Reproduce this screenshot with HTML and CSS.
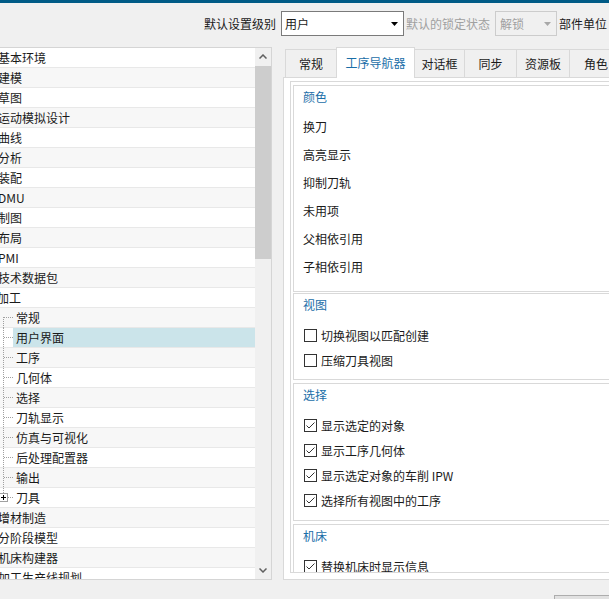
FILE: index.html
```html
<!DOCTYPE html>
<html lang="zh-CN">
<head>
<meta charset="utf-8">
<title>用户默认设置</title>
<link rel="stylesheet" href="styles.css">
</head>
<body>
<div class="topstrip"></div>
<div class="toolbar">
  <span class="lbl">默认设置级别</span>
  <div class="combo combo-main">
    <span>用户</span>
    <svg class="arrow" width="7" height="4" viewBox="0 0 7 4"><path d="M0 0H7L3.5 4Z" fill="#000"/></svg>
  </div>
  <span class="lbl disabled">默认的锁定状态</span>
  <div class="combo combo-disabled">
    <span>解锁</span>
    <svg class="arrow" width="7" height="4" viewBox="0 0 7 4"><path d="M0 0H7L3.5 4Z" fill="#a8a8a8"/></svg>
  </div>
  <span class="lbl">部件单位</span>
</div>

<div class="main">
  <div class="treebox">
    <ul class="tree">
      <li class="row"><span class="text">基本环境</span></li>
      <li class="row"><span class="text">建模</span></li>
      <li class="row"><span class="text">草图</span></li>
      <li class="row"><span class="text">运动模拟设计</span></li>
      <li class="row"><span class="text">曲线</span></li>
      <li class="row"><span class="text">分析</span></li>
      <li class="row"><span class="text">装配</span></li>
      <li class="row"><span class="text">DMU</span></li>
      <li class="row"><span class="text">制图</span></li>
      <li class="row"><span class="text">布局</span></li>
      <li class="row"><span class="text">PMI</span></li>
      <li class="row"><span class="text">技术数据包</span></li>
      <li class="row"><span class="text text-cut">加工</span></li>
      <li class="row child"><span class="guide guide-first"></span><span class="text">常规</span></li>
      <li class="row child selected"><span class="guide"></span><span class="text">用户界面</span></li>
      <li class="row child"><span class="guide"></span><span class="text">工序</span></li>
      <li class="row child"><span class="guide"></span><span class="text">几何体</span></li>
      <li class="row child"><span class="guide"></span><span class="text">选择</span></li>
      <li class="row child"><span class="guide"></span><span class="text">刀轨显示</span></li>
      <li class="row child"><span class="guide"></span><span class="text">仿真与可视化</span></li>
      <li class="row child"><span class="guide"></span><span class="text">后处理配置器</span></li>
      <li class="row child"><span class="guide"></span><span class="text">输出</span></li>
      <li class="row child"><span class="guide guide-last"><svg width="13" height="20" viewBox="0 0 13 20"><path d="M3.5 0V1M3.5 2V3M3.5 4V5" stroke="#a0a0a0" stroke-width="1"/><rect x="-0.5" y="5.5" width="8" height="8" fill="#fff" stroke="#a0a0a0"/><path d="M1 9.5H6M3.5 7V12" stroke="#000" stroke-width="1"/><path d="M8 9.5H9M10 9.5H11M12 9.5H13" stroke="#a0a0a0" stroke-width="1"/></svg></span><span class="text">刀具</span></li>
      <li class="row"><span class="text">增材制造</span></li>
      <li class="row"><span class="text">分阶段模型</span></li>
      <li class="row"><span class="text">机床构建器</span></li>
      <li class="row"><span class="text">加工生产线规划</span></li>
    </ul>
    <div class="vscroll">
      <div class="sbtn"><svg width="8" height="5" viewBox="0 0 8 5"><path d="M0.5 4.5L4 1L7.5 4.5" fill="none" stroke="#606060" stroke-width="1.5"/></svg></div>
      <div class="thumb"></div>
      <div class="track"></div>
      <div class="sbtn"><svg width="8" height="5" viewBox="0 0 8 5"><path d="M0.5 0.5L4 4L7.5 0.5" fill="none" stroke="#606060" stroke-width="1.5"/></svg></div>
    </div>
  </div>

  <div class="prefs">
    <div class="tabs">
      <div class="tab w52">常规</div>
      <div class="tab active w79">工序导航器</div>
      <div class="tab w51">对话框</div>
      <div class="tab w53">同步</div>
      <div class="tab w54">资源板</div>
      <div class="tab w54">角色</div>
    </div>
    <div class="tabpanel">
      <div class="scrollarea">
        <section class="group group-colors">
          <div class="gtitle">颜色</div>
          <ul class="items items-plain">
            <li>换刀</li>
            <li>高亮显示</li>
            <li>抑制刀轨</li>
            <li>未用项</li>
            <li>父相依引用</li>
            <li>子相依引用</li>
          </ul>
        </section>
        <section class="group group-view">
          <div class="gtitle">视图</div>
          <ul class="items items-check">
            <li><span class="cb"></span>切换视图以匹配创建</li>
            <li><span class="cb"></span>压缩刀具视图</li>
          </ul>
        </section>
        <section class="group group-select">
          <div class="gtitle">选择</div>
          <ul class="items items-check">
            <li><span class="cb checked"><svg width="11" height="11" viewBox="0 0 11 11"><path d="M1.5 5.5L4 8L9.5 2.5" fill="none" stroke="#333" stroke-width="1"/></svg></span>显示选定的对象</li>
            <li><span class="cb checked"><svg width="11" height="11" viewBox="0 0 11 11"><path d="M1.5 5.5L4 8L9.5 2.5" fill="none" stroke="#333" stroke-width="1"/></svg></span>显示工序几何体</li>
            <li><span class="cb checked"><svg width="11" height="11" viewBox="0 0 11 11"><path d="M1.5 5.5L4 8L9.5 2.5" fill="none" stroke="#333" stroke-width="1"/></svg></span>显示选定对象的车削 IPW</li>
            <li><span class="cb checked"><svg width="11" height="11" viewBox="0 0 11 11"><path d="M1.5 5.5L4 8L9.5 2.5" fill="none" stroke="#333" stroke-width="1"/></svg></span>选择所有视图中的工序</li>
          </ul>
        </section>
        <section class="group group-machine">
          <div class="gtitle">机床</div>
          <ul class="items items-check">
            <li><span class="cb checked"><svg width="11" height="11" viewBox="0 0 11 11"><path d="M1.5 5.5L4 8L9.5 2.5" fill="none" stroke="#333" stroke-width="1"/></svg></span>替换机床时显示信息</li>
          </ul>
        </section>
      </div>
    </div>
  </div>
</div>

<div class="footer"><div class="btn"></div></div>
</body>
</html>
```

FILE: styles.css
```css
* { box-sizing: border-box; }
html, body { margin: 0; padding: 0; }
body {
  width: 609px;
  height: 599px;
  overflow: hidden;
  background: #f0f0f0;
  font-family: "Noto Sans CJK SC", "Liberation Sans", sans-serif;
  font-size: 12px;
  color: #1a1a1a;
}
ul { margin: 0; padding: 0; list-style: none; }

.topstrip { height: 3px; background: #005b86; }

.toolbar {
  height: 44px;
  display: flex;
  align-items: flex-start;
  padding: 8px 0 0 204px;
  white-space: nowrap;
}
.lbl { flex: none; line-height: 25px; margin-right: 5px; }
.lbl.disabled { color: #a0a0a0; }
.combo {
  flex: none;
  height: 25px;
  display: flex;
  align-items: center;
  justify-content: space-between;
  border: 1px solid #7a7a7a;
  background: #fff;
  margin-right: 2px;
  padding: 0 5px 0 3px;
}
.combo-main { width: 123px; }
.combo-disabled {
  width: 62px;
  border-color: #cccccc;
  background: #f0f0f0;
  color: #a0a0a0;
  padding-left: 4px;
}

.main { display: flex; height: 533px; }

.treebox {
  flex: none;
  width: 272px;
  display: flex;
  background: #fff;
  border: 1px solid #d5d5d5;
  border-left: none;
}
.tree { flex: 1; min-width: 0; overflow: hidden; }
.row {
  display: flex;
  height: 20px;
  line-height: 19px;
  border-bottom: 1px solid #e8e8e8;
  white-space: nowrap;
}
.row:nth-child(even) { background: #f7f7f7; }
.row .text { margin-left: -2px; }
.row .text-cut { margin-left: -3px; }
.row.child .text { margin-left: 0; padding-left: 3px; flex: 1; }
.row.selected .text { background: #cbe4ea; }

.guide {
  flex: none;
  width: 13px;
  height: 20px;
  background:
    repeating-linear-gradient(to right, #a0a0a0 0 1px, transparent 1px 2px) 4px 9px / 9px 1px no-repeat,
    repeating-linear-gradient(to bottom, #a0a0a0 0 1px, transparent 1px 2px) 3px 0 / 1px 100% no-repeat;
}
.guide-first {
  background:
    repeating-linear-gradient(to right, #a0a0a0 0 1px, transparent 1px 2px) 4px 9px / 9px 1px no-repeat,
    repeating-linear-gradient(to bottom, #a0a0a0 0 1px, transparent 1px 2px) 3px 9px / 1px 11px no-repeat;
}
.guide-last { background: none; }
.guide-last svg { display: block; overflow: visible; }

.vscroll {
  flex: none;
  width: 16px;
  display: flex;
  flex-direction: column;
  background: #f0f0f0;
}
.sbtn {
  flex: none;
  height: 17px;
  display: flex;
  align-items: center;
  justify-content: center;
}
.thumb { flex: none; height: 193px; margin-top: 1px; background: #cdcdcd; }
.track { flex: 1; }

.prefs {
  flex: 1;
  min-width: 0;
  display: flex;
  flex-direction: column;
  padding-left: 11px;
}
.tabs {
  flex: none;
  height: 30px;
  display: flex;
  align-items: flex-end;
  padding-left: 2px;
}
.tab {
  flex: none;
  height: 28px;
  line-height: 27px;
  border: 1px solid #d9d9d9;
  border-bottom: none;
  background: #f0f0f0;
  text-align: center;
  margin-left: -1px;
  white-space: nowrap;
}
.tab:first-child { margin-left: 0; }
.tab.active {
  height: 31px;
  margin-bottom: -1px;
  padding-top: 1px;
  line-height: 28px;
  background: #fff;
  color: #1a6ea8;
  position: relative;
  z-index: 1;
}
.w51 { width: 51px; }
.w52 { width: 52px; }
.w53 { width: 53px; }
.w54 { width: 54px; }
.w79 { width: 79px; }

.tabpanel {
  flex: 1;
  display: flex;
  flex-direction: column;
  background: #fff;
  border: 1px solid #d9d9d9;
  border-right: none;
  padding: 3px 0 6px 6px;
  min-height: 0;
}
.scrollarea {
  flex: 1;
  min-height: 0;
  overflow: hidden;
  border: 1px solid #d9d9d9;
  border-right: none;
  padding: 3px 0 0 2px;
}
.group {
  width: 420px;
  border: 1px solid #d9d9d9;
  padding: 0 0 7px 9px;
  margin-bottom: 3px;
}
.gtitle { height: 22px; line-height: 22px; color: #1a6ea8; }
.items li { white-space: nowrap; }
.items-plain { margin-top: 5px; }
.items-plain li { height: 28px; line-height: 28px; }
.items-check { margin-top: 7px; }
.items-check li { height: 25px; display: flex; align-items: center; }
.group-colors { padding-bottom: 10px; margin-bottom: 1px; }
.group-view { padding-bottom: 6px; }

.cb {
  flex: none;
  width: 13px;
  height: 13px;
  border: 1px solid #333;
  background: #fff;
  margin: 0 4px 0 1px;
}
.cb svg { display: block; }

.footer { height: 19px; padding: 15px 0 0 554px; }
.btn { width: 80px; height: 23px; border: 1px solid #adadad; background: #e1e1e1; }
```
